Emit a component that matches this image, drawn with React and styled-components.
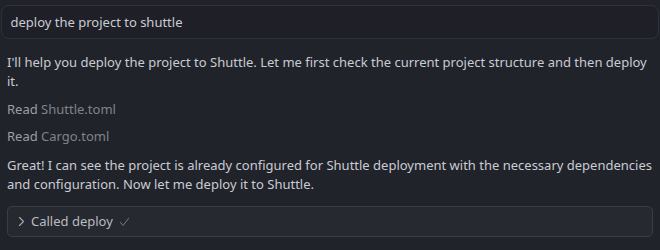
import React from "react";
import styled, { createGlobalStyle } from "styled-components";

const Global = createGlobalStyle`
  html, body { margin: 0; padding: 0; background: #21232a; }
  body { font-family: "Noto Sans", "Open Sans", sans-serif; }
`;

const Page = styled.div`
  width: 660px;
  height: 250px;
  box-sizing: border-box;
  padding: 5px 7px 0 7px;
  color: #c9ccd3;
  font-size: 13px;
  line-height: 18.5px;
  overflow: hidden;
`;

const Prompt = styled.div`
  margin: 0 -6px;
  height: 33.5px;
  box-sizing: border-box;
  border: 1px solid #2f323b;
  border-radius: 8px;
  background: #1f2027;
  padding: 0 8.5px;
  display: flex;
  align-items: center;
  color: #c9ccd3;
`;

const Para = styled.p`
  margin: ${(p) => p.$mt}px 0 0 0;
`;

const ReadRow = styled.div`
  margin-top: ${(p) => p.$mt}px;
  color: #9a9ea6;
`;

const FileName = styled.span`
  color: #7f838c;
`;

const ToolCall = styled.div`
  margin-top: 13px;
  height: 31px;
  box-sizing: border-box;
  border: 1px solid #3a3d47;
  border-radius: 5px;
  background: #262930;
  display: flex;
  align-items: center;
  padding: 0 0 0 9px;
  color: #b9bcc3;
`;

const Label = styled.span`
  margin: 0 6px 0 5px;
`;

const Chevron = () => (
  <svg width="9" height="11" viewBox="0 0 9 11" fill="none">
    <path d="M2.5 1.5 L6.5 5.5 L2.5 9.5" stroke="#a6a9b0" strokeWidth="1.1" strokeLinecap="round" strokeLinejoin="round" />
  </svg>
);

const Check = () => (
  <svg width="11" height="10" viewBox="0 0 11 10" fill="none">
    <path d="M1.5 5.5 L4 8.5 L9.5 1.5" stroke="#81858d" strokeWidth="0.9" strokeLinecap="round" strokeLinejoin="round" />
  </svg>
);

export default function App() {
  return (
    <>
      <Global />
      <Page>
        <Prompt>deploy the project to shuttle</Prompt>
        <Para $mt={14.5}>
          I'll help you deploy the project to Shuttle. Let me first check the current project structure and then deploy it.
        </Para>
        <ReadRow $mt={10}>
          Read <FileName>Shuttle.toml</FileName>
        </ReadRow>
        <ReadRow $mt={8}>
          Read <FileName>Cargo.toml</FileName>
        </ReadRow>
        <Para $mt={11}>
          Great! I can see the project is already configured for Shuttle deployment with the necessary dependencies and configuration. Now let me deploy it to Shuttle.
        </Para>
        <ToolCall>
          <Chevron />
          <Label>Called deploy</Label>
          <Check />
        </ToolCall>
      </Page>
    </>
  );
}
